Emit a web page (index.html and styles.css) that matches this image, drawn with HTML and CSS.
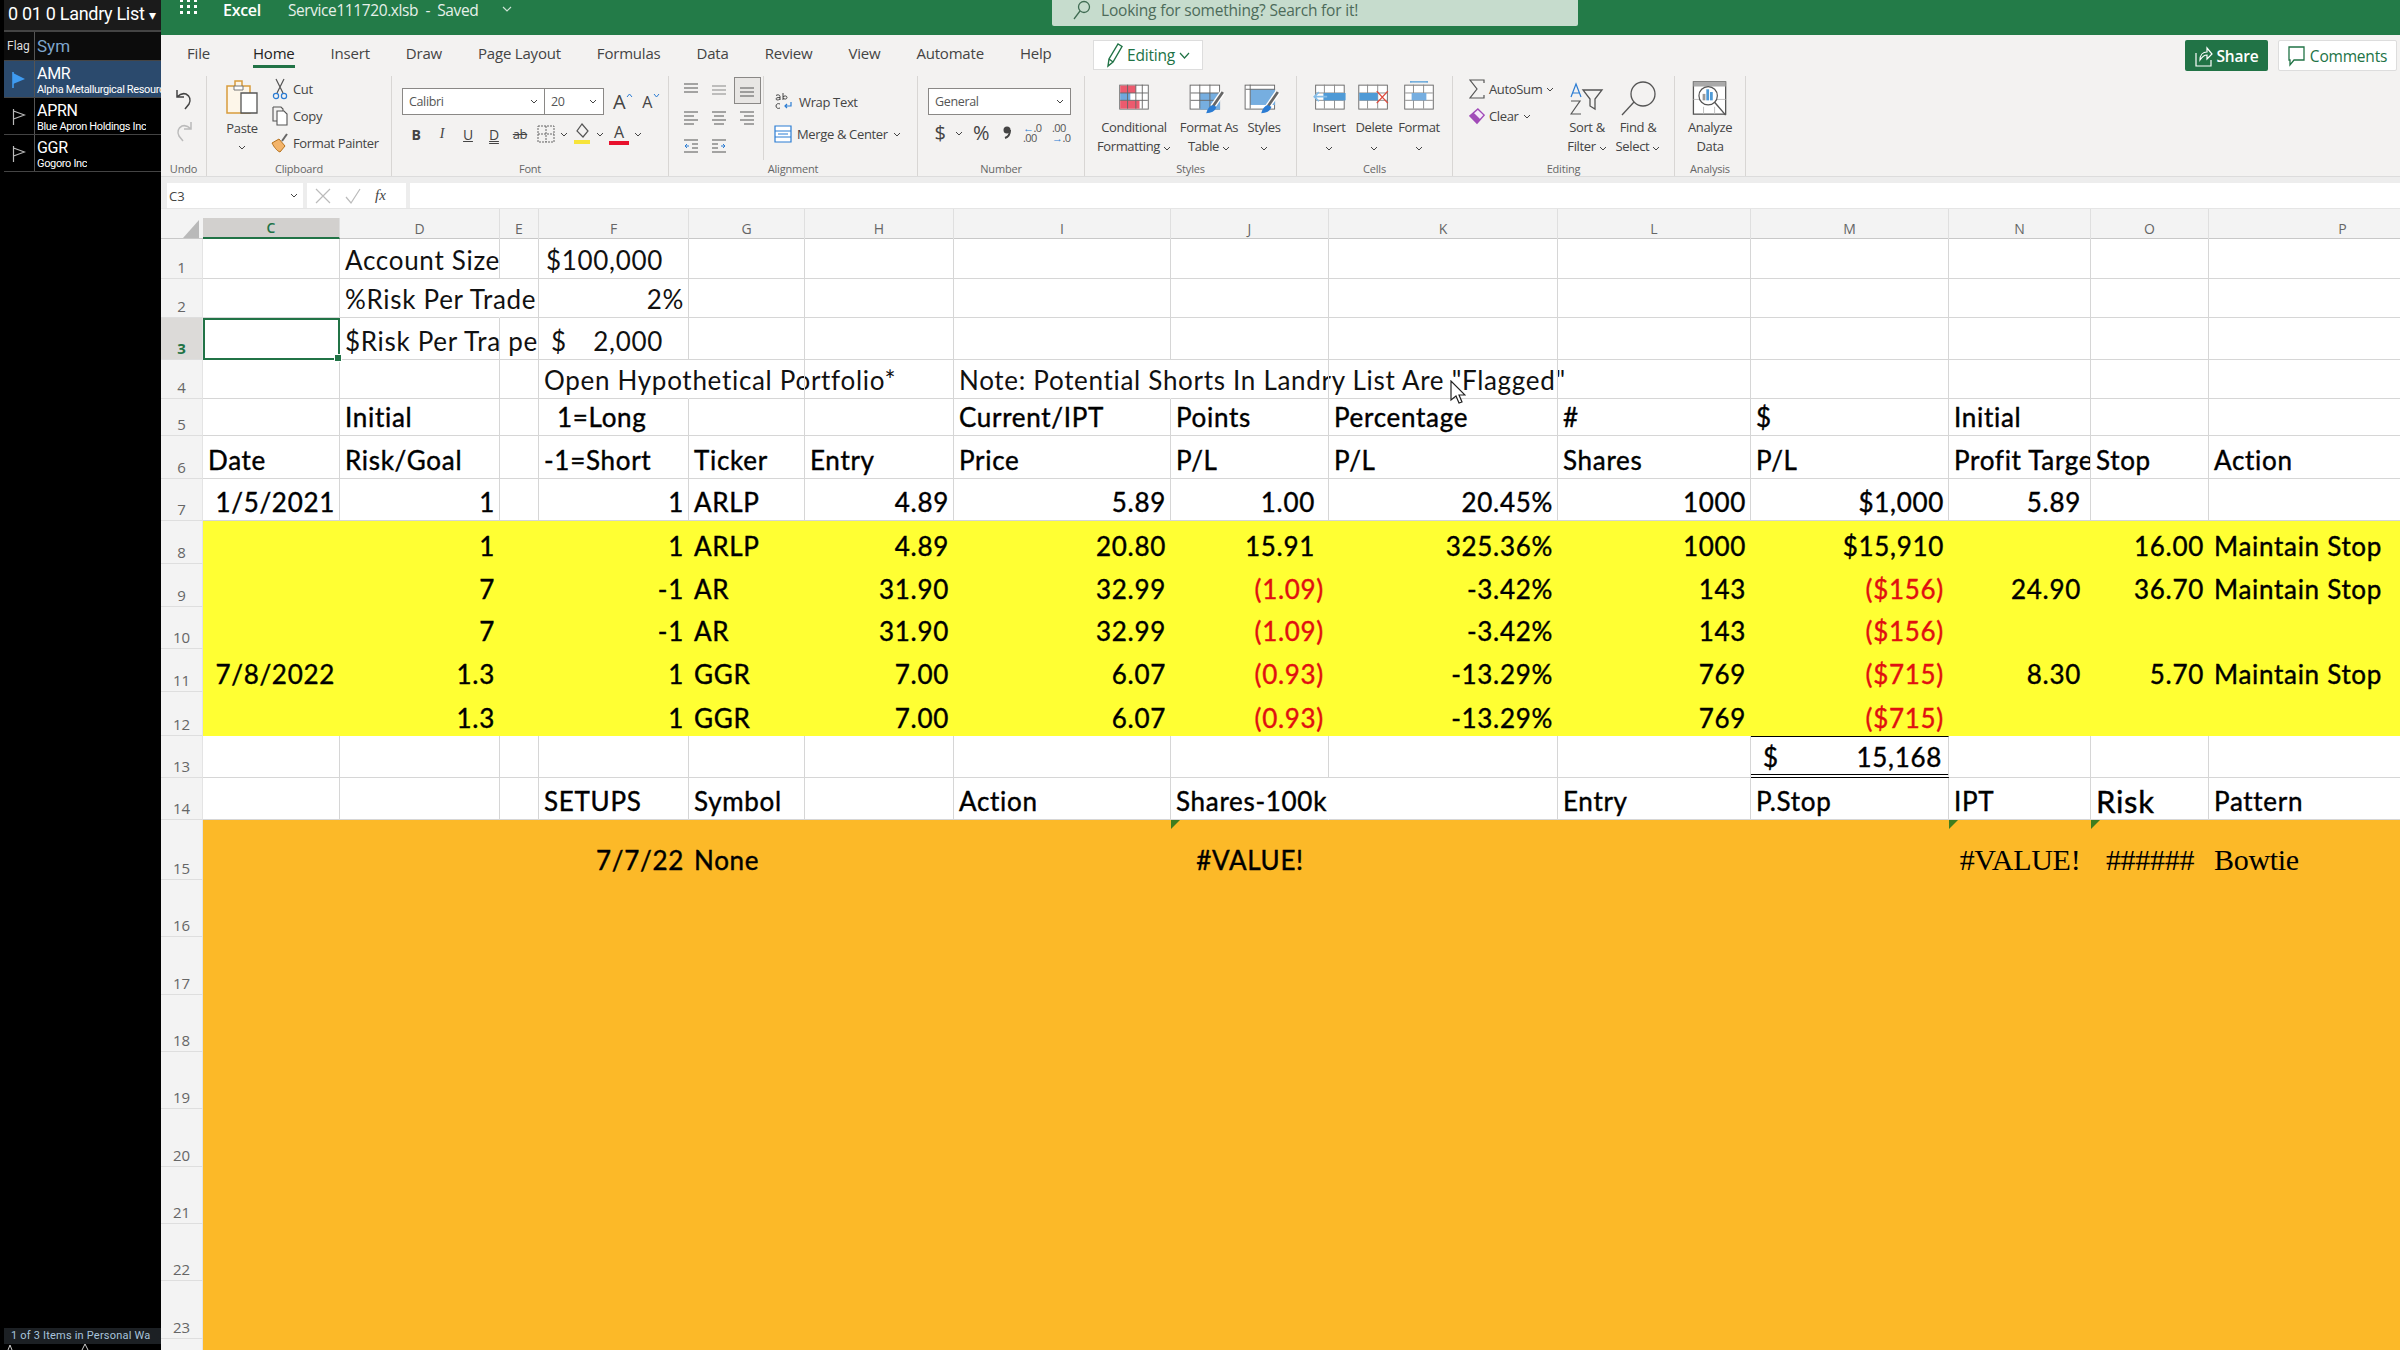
FILE: index.html
```html
<!DOCTYPE html>
<html lang="en">
<head>
    <meta charset="UTF-8">
    <title>Service111720.xlsb - Excel</title>
    <link rel="stylesheet" href="styles.css">
</head>
<body>
<div class="page">

    <!-- watch list on the left -->
    <aside class="watch">
        <div class="watch-title">0 01 0 Landry List <span class="caret">▾</span></div>
        <div class="watch-head"><span class="flag-col">Flag</span><span class="sym-col">Sym</span></div>
        <div class="watch-row selected">
            <div class="flag-col"><svg width="14" height="18" viewBox="0 0 14 18"><path d="M1 1v16" stroke="#3f9bf0" stroke-width="1.6"/><path d="M1 2l12 6-12 5z" fill="#3f9bf0"/></svg></div>
            <div class="sym-col"><b>AMR</b><small>Alpha Metallurgical Resources</small></div>
        </div>
        <div class="watch-row">
            <div class="flag-col"><svg width="14" height="18" viewBox="0 0 14 18"><path d="M1.500 1v16M1.500 3l11 4-11 4" fill="none" stroke="#bbb" stroke-width="1.200"/></svg></div>
            <div class="sym-col"><b>APRN</b><small>Blue Apron Holdings Inc</small></div>
        </div>
        <div class="watch-row">
            <div class="flag-col"><svg width="14" height="18" viewBox="0 0 14 18"><path d="M1.500 1v16M1.500 3l11 4-11 4" fill="none" stroke="#bbb" stroke-width="1.200"/></svg></div>
            <div class="sym-col"><b>GGR</b><small>Gogoro Inc</small></div>
        </div>
        <div class="watch-status">1 of 3 Items in Personal Wa</div>
        <svg class="watch-foot" width="157" height="6" viewBox="0 0 157 6"><path d="M4 6l2-5 2 5M78 6l3-6 3 6" fill="none" stroke="#ccc"/></svg>
    </aside>

    <main class="excel">
        <!-- green title bar -->
        <header class="titlebar">
            <svg class="waffle" width="18" height="14" viewBox="0 0 18 14" fill="#fff"><rect x="0" y="0" width="3" height="2"/><rect x="7" y="0" width="3" height="2"/><rect x="14" y="0" width="3" height="2"/><rect x="0" y="5" width="3" height="3"/><rect x="7" y="5" width="3" height="3"/><rect x="14" y="5" width="3" height="3"/><rect x="0" y="11" width="3" height="3"/><rect x="7" y="11" width="3" height="3"/><rect x="14" y="11" width="3" height="3"/></svg>
            <span class="app-name">Excel</span>
            <span class="doc-name">Service111720.xlsb &nbsp;-&nbsp; Saved</span>
            <svg class="doc-chev" width="10" height="6" viewBox="0 0 10 6"><path d="M1 1l4 4 4-4" fill="none" stroke="#cfe3d6" stroke-width="1.200"/></svg>
            <div class="search">
                <svg width="20" height="20" viewBox="0 0 20 20"><circle cx="12" cy="7" r="5.500" fill="none" stroke="#3f6b52" stroke-width="1.300"/><path d="M8 11l-6 8" stroke="#3f6b52" stroke-width="1.300"/></svg>
                <span>Looking for something? Search for it!</span>
            </div>
        </header>

        <!-- tabs -->
        <nav class="tabs">
            <span class="tab first">File</span>
            <span class="tab active">Home</span>
            <span class="tab">Insert</span>
            <span class="tab">Draw</span>
            <span class="tab">Page Layout</span>
            <span class="tab">Formulas</span>
            <span class="tab">Data</span>
            <span class="tab">Review</span>
            <span class="tab">View</span>
            <span class="tab">Automate</span>
            <span class="tab">Help</span>
            <span class="editing-btn">
                <svg width="18" height="26" viewBox="0 0 18 26"><path d="M3 24l1-7L13 2l4 2.500L8 20z M4 17l4 3" fill="none" stroke="#217346" stroke-width="1.400"/></svg>
                Editing
                <svg width="11" height="7" viewBox="0 0 11 7"><path d="M1 1l4.500 5L10 1" fill="none" stroke="#217346" stroke-width="1.200"/></svg>
            </span>
            <span class="share-btn">
                <svg width="18" height="22" viewBox="0 0 18 22"><path d="M1 8v13h15v-6M5 15c0-5 3-8 7-8V3l5 6-5 5v-4c-3 0-5 2-7 5z" fill="none" stroke="#fff" stroke-width="1.200"/></svg>
                Share
            </span>
            <span class="comments-btn">
                <svg width="17" height="22" viewBox="0 0 17 22"><path d="M1 2h15v13H6l-4 5v-5H1z" fill="none" stroke="#217346" stroke-width="1.300"/></svg>
                Comments
            </span>
        </nav>

        <!-- ribbon -->
        <section class="ribbon">
            <div class="group g-undo">
                <div class="group-body undo-col">
                    <svg width="20" height="24" viewBox="0 0 20 24"><path d="M3 3v7h7M3 10c3-3 6-4 9-3 4 2 5 6 3 10l-4 5" fill="none" stroke="#444" stroke-width="1.500"/></svg>
                    <svg width="20" height="24" viewBox="0 0 20 24"><path d="M17 3v7h-7M17 10c-3-3-6-4-9-3-4 2-5 6-3 10l4 5" fill="none" stroke="#bbb" stroke-width="1.500"/></svg>
                </div>
                <div class="group-label">Undo</div>
            </div>

            <div class="group g-clip">
                <div class="group-body clip-body">
                    <div class="paste">
                        <svg width="32" height="36" viewBox="0 0 32 36"><path d="M1 6h8V1h7v5h8v27H1z" fill="#fdf6e9" stroke="#d89c3c" stroke-width="1.500"/><path d="M8 6h9v4H8z" fill="#fff" stroke="#777"/><path d="M15 13h16v20H15z" fill="#fff" stroke="#555" stroke-width="1.300"/></svg>
                        <span>Paste</span>
                        <svg class="chev" width="8" height="5" viewBox="0 0 8 5"><path d="M1 1l3 3 3-3" fill="none" stroke="#444"/></svg>
                    </div>
                    <div class="clip-list">
                        <div class="clip-item"><svg width="18" height="22" viewBox="0 0 18 22"><path d="M5 1l7 14M13 1L6 15" stroke="#555" stroke-width="1.200"/><circle cx="5" cy="18" r="2.600" fill="none" stroke="#2b7cd3" stroke-width="1.200"/><circle cx="13" cy="18" r="2.600" fill="none" stroke="#2b7cd3" stroke-width="1.200"/></svg>Cut</div>
                        <div class="clip-item"><svg width="18" height="20" viewBox="0 0 16 20"><path d="M1 1h8l2 2v2M1 1v14h4" fill="none" stroke="#555" stroke-width="1.100"/><path d="M5 5h7l3 3v11H5z" fill="#fff" stroke="#555" stroke-width="1.100"/></svg>Copy</div>
                        <div class="clip-item"><svg width="18" height="20" viewBox="0 0 18 20"><path d="M1 10l7-4 6 7-5 6c-3-1-6-5-8-9z" fill="#f3b46a" stroke="#b5711c"/><path d="M11 8l5-7" stroke="#666" stroke-width="2"/></svg>Format Painter</div>
                    </div>
                </div>
                <div class="group-label">Clipboard</div>
            </div>

            <div class="group g-font">
                <div class="group-body font-body">
                    <div class="font-row1">
                        <div class="select font-name">Calibri<svg width="8" height="5" viewBox="0 0 8 5"><path d="M1 1l3 3 3-3" fill="none" stroke="#444"/></svg></div>
                        <div class="select font-size">20<svg width="8" height="5" viewBox="0 0 8 5"><path d="M1 1l3 3 3-3" fill="none" stroke="#444"/></svg></div>
                        <span class="grow-a">A</span><svg class="tick" width="7" height="5" viewBox="0 0 7 5"><path d="M1 4l2.500-3L6 4" fill="none" stroke="#2b7cd3"/></svg>
                        <span class="shrink-a">A</span><svg class="tick" width="7" height="5" viewBox="0 0 7 5"><path d="M1 1l2.500 3L6 1" fill="none" stroke="#2b7cd3"/></svg>
                    </div>
                    <div class="font-row2">
                        <span class="fmt bold">B</span>
                        <span class="fmt ital">I</span>
                        <span class="fmt under">U</span>
                        <span class="fmt dunder">D</span>
                        <span class="fmt strike">ab</span>
                        <svg width="18" height="18" viewBox="0 0 18 18"><path d="M1 1h16v16H1zM9 1v16M1 9h16" fill="none" stroke="#666" stroke-dasharray="2 1"/></svg>
                        <svg class="chev" width="8" height="5" viewBox="0 0 8 5"><path d="M1 1l3 3 3-3" fill="none" stroke="#444"/></svg>
                        <svg width="18" height="22" viewBox="0 0 18 22"><path d="M9 1l6 7-5 6-6-6z" fill="none" stroke="#555" stroke-width="1.200"/><rect x="1" y="17" width="16" height="4" fill="#f7e43a"/></svg>
                        <svg class="chev" width="8" height="5" viewBox="0 0 8 5"><path d="M1 1l3 3 3-3" fill="none" stroke="#444"/></svg>
                        <span class="color-a">A</span>
                        <svg class="chev" width="8" height="5" viewBox="0 0 8 5"><path d="M1 1l3 3 3-3" fill="none" stroke="#444"/></svg>
                    </div>
                </div>
                <div class="group-label">Font</div>
            </div>

            <div class="group g-align">
                <div class="group-body align-body">
                    <div class="align-grid">
                        <svg width="16" height="16" viewBox="0 0 16 16"><path d="M1 2h14M1 6h14M1 10h14" stroke="#555" stroke-width="1.200"/></svg>
                        <svg width="16" height="16" viewBox="0 0 16 16"><path d="M1 4h14M1 8h14M1 12h14" stroke="#888" stroke-width="1.200"/></svg>
                        <span class="align-on"><svg width="16" height="16" viewBox="0 0 16 16"><path d="M1 6h14M1 10h14M1 14h14" stroke="#555" stroke-width="1.200"/></svg></span>
                        <svg width="16" height="16" viewBox="0 0 16 16"><path d="M1 2h14M1 6h10M1 10h14M1 14h10" stroke="#555" stroke-width="1.200"/></svg>
                        <svg width="16" height="16" viewBox="0 0 16 16"><path d="M1 2h14M3 6h10M1 10h14M3 14h10" stroke="#555" stroke-width="1.200"/></svg>
                        <svg width="16" height="16" viewBox="0 0 16 16"><path d="M1 2h14M5 6h10M1 10h14M5 14h10" stroke="#555" stroke-width="1.200"/></svg>
                        <svg width="16" height="16" viewBox="0 0 16 16"><path d="M1 2h14M9 6h6M9 10h6M1 14h14" stroke="#555" stroke-width="1.200"/><path d="M6 8H2m2-2L2 8l2 2" fill="none" stroke="#2b7cd3"/></svg>
                        <svg width="16" height="16" viewBox="0 0 16 16"><path d="M1 2h14M1 6h6M1 10h6M1 14h14" stroke="#555" stroke-width="1.200"/><path d="M10 8h4m-2-2l2 2-2 2" fill="none" stroke="#2b7cd3"/></svg>
                    </div>
                    <div class="align-text">
                        <div class="align-item"><svg width="20" height="20" viewBox="0 0 20 20"><path d="M2 3.500c1-1 4-1 4 1v3.500M6 5.500c-3 0-4 .5-4 1.500s2 1.500 4 0M9 1v7M9 5c1-1.500 4-1.500 4 .5s-3 2-4 .5M6 12c-2-1-4 0-4 2s2 3 4 2" fill="none" stroke="#444"/><path d="M17 10v4h-6m2-2l-2 2 2 2" fill="none" stroke="#2b7cd3" stroke-width="1.200"/></svg>Wrap Text</div>
                        <div class="align-item"><svg width="18" height="18" viewBox="0 0 18 18"><path d="M1 1h16v16H1z" fill="#fff" stroke="#2b7cd3" stroke-width="1.200"/><path d="M1 6h16M1 12h16M4 9h10" stroke="#2b7cd3"/></svg>Merge &amp; Center<svg class="chev" width="8" height="5" viewBox="0 0 8 5"><path d="M1 1l3 3 3-3" fill="none" stroke="#444"/></svg></div>
                    </div>
                </div>
                <div class="group-label">Alignment</div>
            </div>

            <div class="group g-num">
                <div class="group-body num-body">
                    <div class="select num-format">General<svg width="8" height="5" viewBox="0 0 8 5"><path d="M1 1l3 3 3-3" fill="none" stroke="#444"/></svg></div>
                    <div class="num-row">
                        <span class="num-sign">$</span>
                        <svg class="chev" width="8" height="5" viewBox="0 0 8 5"><path d="M1 1l3 3 3-3" fill="none" stroke="#444"/></svg>
                        <span class="num-sign pct">%</span>
                        <svg class="comma" width="14" height="18" viewBox="0 0 14 18"><circle cx="7" cy="6" r="3.500" fill="#444"/><path d="M10 6c0 4-2 7-5 8" fill="none" stroke="#444" stroke-width="2"/></svg>
                        <span class="dec"><i>←</i>.0<br>.00</span>
                        <span class="dec">.00<br><i>→</i>.0</span>
                    </div>
                </div>
                <div class="group-label">Number</div>
            </div>

            <div class="group g-styles">
                <div class="group-body big-row styles-row">
                    <div class="big-btn w-cond">
                        <svg width="32" height="38" viewBox="0 0 32 38"><rect x="0.500" y="4.500" width="31" height="26" fill="#fff" stroke="#666"/><rect x="1" y="5" width="17" height="8" fill="#ec5b6e"/><rect x="1" y="13" width="11" height="8" fill="#6fa8dc"/><rect x="1" y="21" width="21" height="9" fill="#ec5b6e"/><path d="M9 4v26M18 4v26M25 4v26M1 13h30M1 21h30" stroke="#666"/></svg>
                        <span>Conditional<br>Formatting <svg class="chev" width="8" height="5" viewBox="0 0 8 5"><path d="M1 1l3 3 3-3" fill="none" stroke="#444"/></svg></span>
                    </div>
                    <div class="big-btn w-table">
                        <svg width="42" height="38" viewBox="0 0 42 38"><rect x="0.500" y="4.500" width="32" height="26" fill="#fff" stroke="#666"/><rect x="11" y="13" width="22" height="18" fill="#76aee0"/><path d="M11 4v26M22 4v26M1 13h32M1 21h32" stroke="#666"/><path d="M36 12L25 28" stroke="#fff" stroke-width="6"/><path d="M36 12L25 28" stroke="#666" stroke-width="3"/><path d="M25 26c-3 1-6 4-7 9 5 0 10-2 11-7z" fill="#2b7cd3"/></svg>
                        <span>Format As<br>Table <svg class="chev" width="8" height="5" viewBox="0 0 8 5"><path d="M1 1l3 3 3-3" fill="none" stroke="#444"/></svg></span>
                    </div>
                    <div class="big-btn w-style">
                        <svg width="42" height="38" viewBox="0 0 42 38"><rect x="0.500" y="4.500" width="32" height="26" fill="#fff" stroke="#666"/><rect x="6" y="9" width="27" height="17" fill="#76aee0"/><path d="M1 9h32M6 4v26" stroke="#666"/><path d="M36 12L25 28" stroke="#fff" stroke-width="6"/><path d="M36 12L25 28" stroke="#666" stroke-width="3"/><path d="M25 26c-3 1-6 4-7 9 5 0 10-2 11-7z" fill="#2b7cd3"/></svg>
                        <span>Styles<br><svg class="chev" width="8" height="5" viewBox="0 0 8 5"><path d="M1 1l3 3 3-3" fill="none" stroke="#444"/></svg></span>
                    </div>
                </div>
                <div class="group-label">Styles</div>
            </div>

            <div class="group g-cells">
                <div class="group-body big-row cells-row">
                    <div class="big-btn w-cell">
                        <svg width="36" height="38" viewBox="0 0 36 38"><rect x="3.500" y="4.500" width="31" height="26" fill="#fff" stroke="#666"/><path d="M13 4v26M24 4v26M3 13h31M3 21h31" stroke="#888"/><rect x="12" y="13" width="24" height="8" fill="#4f9ad6"/><path d="M16 17H2m5-5l-5 5 5 5" fill="none" stroke="#85bde8" stroke-width="1.800"/></svg>
                        <span>Insert<br><svg class="chev" width="8" height="5" viewBox="0 0 8 5"><path d="M1 1l3 3 3-3" fill="none" stroke="#444"/></svg></span>
                    </div>
                    <div class="big-btn w-cell">
                        <svg width="34" height="38" viewBox="0 0 34 38"><rect x="0.500" y="4.500" width="31" height="26" fill="#fff" stroke="#666"/><path d="M10 4v26M21 4v26M1 13h30M1 21h30" stroke="#888"/><rect x="1" y="13" width="20" height="8" fill="#4f9ad6"/><path d="M20 11l12 13M32 11L20 24" stroke="#e0493c" stroke-width="1.500"/></svg>
                        <span>Delete<br><svg class="chev" width="8" height="5" viewBox="0 0 8 5"><path d="M1 1l3 3 3-3" fill="none" stroke="#444"/></svg></span>
                    </div>
                    <div class="big-btn w-cell">
                        <svg width="32" height="38" viewBox="0 0 32 38"><rect x="0.500" y="4.500" width="31" height="26" fill="#fff" stroke="#666"/><path d="M10 4v26M21 4v26M1 13h30M1 21h30" stroke="#888"/><rect x="8" y="13" width="16" height="8" fill="#76aee0"/><path d="M7 1h18M7 0v2M25 0v2" stroke="#4f9ad6" stroke-width="1.200"/></svg>
                        <span>Format<br><svg class="chev" width="8" height="5" viewBox="0 0 8 5"><path d="M1 1l3 3 3-3" fill="none" stroke="#444"/></svg></span>
                    </div>
                </div>
                <div class="group-label">Cells</div>
            </div>

            <div class="group g-edit">
                <div class="group-body edit-body">
                    <div class="edit-list">
                        <div class="edit-item"><svg width="16" height="20" viewBox="0 0 16 20"><path d="M15 4V1H1l7 9-7 9h14v-3" fill="none" stroke="#555" stroke-width="1.200"/></svg>AutoSum<svg class="chev" width="8" height="5" viewBox="0 0 8 5"><path d="M1 1l3 3 3-3" fill="none" stroke="#444"/></svg></div>
                        <div class="edit-item"><svg width="16" height="18" viewBox="0 0 18 18"><path d="M10 1l7 7-8 9-8-8z" fill="#f6e9fa" stroke="#a14bb8" stroke-width="1.600"/><path d="M5 5l8 8-4 4-8-8z" fill="#a14bb8"/></svg>Clear<svg class="chev" width="8" height="5" viewBox="0 0 8 5"><path d="M1 1l3 3 3-3" fill="none" stroke="#444"/></svg></div>
                    </div>
                    <div class="big-btn w-sort">
                        <svg width="34" height="35" viewBox="0 0 34 35"><path d="M13 9h19l-7 9v10l-5-3v-7z" fill="none" stroke="#555" stroke-width="1.300"/><path d="M1 16l5-13 5 13M3 12h6" fill="none" stroke="#2b7cd3" stroke-width="1.200"/><path d="M1 20h9L1 33h10" fill="none" stroke="#555" stroke-width="1.200"/></svg>
                        <span>Sort &amp;<br>Filter <svg class="chev" width="8" height="5" viewBox="0 0 8 5"><path d="M1 1l3 3 3-3" fill="none" stroke="#444"/></svg></span>
                    </div>
                    <div class="big-btn w-find">
                        <svg width="36" height="35" viewBox="0 0 36 35"><circle cx="23" cy="13" r="12" fill="none" stroke="#555" stroke-width="1.300"/><path d="M14 21L2 34" stroke="#555" stroke-width="1.300"/></svg>
                        <span>Find &amp;<br>Select <svg class="chev" width="8" height="5" viewBox="0 0 8 5"><path d="M1 1l3 3 3-3" fill="none" stroke="#444"/></svg></span>
                    </div>
                </div>
                <div class="group-label">Editing</div>
            </div>

            <div class="group g-analysis">
                <div class="group-body big-row">
                    <div class="big-btn w-analyze">
                        <svg width="38" height="38" viewBox="0 0 38 38"><rect x="1" y="1" width="35" height="35" fill="#fff" stroke="#555" stroke-width="1.400"/><rect x="1" y="1" width="35" height="5" fill="#aaa"/><path d="M1 20h35M12 28v8M24 28v8" stroke="#bbb"/><circle cx="17" cy="16" r="10" fill="#fff" stroke="#555" stroke-width="1.300"/><rect x="11" y="14" width="3" height="7" fill="#999"/><rect x="15" y="9" width="3" height="12" fill="#4f9ad6"/><rect x="19" y="12" width="3" height="9" fill="#4f9ad6"/><path d="M24 23l12 14" stroke="#555" stroke-width="1.500"/></svg>
                        <span>Analyze<br>Data</span>
                    </div>
                </div>
                <div class="group-label">Analysis</div>
            </div>
        </section>

        <!-- formula bar -->
        <div class="formula-bar">
            <div class="name-box">C3<svg width="8" height="5" viewBox="0 0 8 5"><path d="M1 1l3 3 3-3" fill="none" stroke="#444"/></svg></div>
            <div class="fx-box">
                <svg width="16" height="16" viewBox="0 0 16 16"><path d="M1 1l14 14M15 1L1 15" stroke="#bbb" stroke-width="1.200"/></svg>
                <svg width="16" height="16" viewBox="0 0 16 16"><path d="M1 9l5 6 9-14" fill="none" stroke="#bbb" stroke-width="1.200"/></svg>
                <span class="fx">fx</span>
            </div>
            <div class="formula-input"></div>
        </div>

        <!-- the sheet -->
        <div class="sheet">
            <div class="row heads">
                <div class="corner"><svg width="16" height="18" viewBox="0 0 16 18"><path d="M16 0v18H0z" fill="#b9b9b9"/></svg></div>
                <div class="col on">C</div><div class="col">D</div><div class="col">E</div><div class="col">F</div><div class="col">G</div><div class="col">H</div><div class="col">I</div><div class="col">J</div><div class="col">K</div><div class="col">L</div><div class="col">M</div><div class="col">N</div><div class="col">O</div><div class="col">P</div>
            </div>

            <div class="row">
                <div class="rh">1</div><div class="c"></div><div class="c">Account Size</div><div class="c"></div><div class="c ra pad-acct">$100,000</div><div class="c"></div><div class="c"></div><div class="c"></div><div class="c"></div><div class="c"></div><div class="c"></div><div class="c"></div><div class="c"></div><div class="c"></div><div class="c"></div>
            </div>
            <div class="row">
                <div class="rh">2</div><div class="c"></div><div class="c over">%Risk Per Trade</div><div class="c"></div><div class="c ra">2%</div><div class="c"></div><div class="c"></div><div class="c"></div><div class="c"></div><div class="c"></div><div class="c"></div><div class="c"></div><div class="c"></div><div class="c"></div><div class="c"></div>
            </div>
            <div class="row">
                <div class="rh on">3</div><div class="c selected-cell"></div><div class="c clip">$Risk Per Tra</div><div class="c clip end">pe</div><div class="c acct pad-acct"><span>$</span><span>2,000</span></div><div class="c"></div><div class="c"></div><div class="c"></div><div class="c"></div><div class="c"></div><div class="c"></div><div class="c"></div><div class="c"></div><div class="c"></div><div class="c"></div>
            </div>
            <div class="row">
                <div class="rh">4</div><div class="c"></div><div class="c"></div><div class="c"></div><div class="c over">Open Hypothetical Portfolio*</div><div class="c"></div><div class="c"></div><div class="c over">Note: Potential Shorts In Landry List Are "Flagged"</div><div class="c"></div><div class="c"></div><div class="c"></div><div class="c"></div><div class="c"></div><div class="c"></div><div class="c"></div>
            </div>
            <div class="row firm">
                <div class="rh">5</div><div class="c"></div><div class="c">Initial</div><div class="c"></div><div class="c ind">1=Long</div><div class="c"></div><div class="c"></div><div class="c">Current/IPT</div><div class="c">Points</div><div class="c">Percentage</div><div class="c">#</div><div class="c">$</div><div class="c">Initial</div><div class="c"></div><div class="c"></div>
            </div>
            <div class="row firm">
                <div class="rh">6</div><div class="c">Date</div><div class="c">Risk/Goal</div><div class="c"></div><div class="c">-1=Short</div><div class="c">Ticker</div><div class="c">Entry</div><div class="c">Price</div><div class="c">P/L</div><div class="c">P/L</div><div class="c">Shares</div><div class="c">P/L</div><div class="c clip">Profit Targe</div><div class="c">Stop</div><div class="c">Action</div>
            </div>
            <div class="row firm">
                <div class="rh">7</div><div class="c ra">1/5/2021</div><div class="c ra">1</div><div class="c"></div><div class="c ra">1</div><div class="c">ARLP</div><div class="c ra">4.89</div><div class="c ra">5.89</div><div class="c ra pad-p">1.00</div><div class="c ra">20.45%</div><div class="c ra">1000</div><div class="c ra">$1,000</div><div class="c ra pad-n">5.89</div><div class="c"></div><div class="c"></div>
            </div>

            <div class="row firm yellow">
                <div class="rh">8</div><div class="c"></div><div class="c ra">1</div><div class="c"></div><div class="c ra">1</div><div class="c">ARLP</div><div class="c ra">4.89</div><div class="c ra">20.80</div><div class="c ra pad-p">15.91</div><div class="c ra">325.36%</div><div class="c ra">1000</div><div class="c ra">$15,910</div><div class="c"></div><div class="c ra">16.00</div><div class="c">Maintain Stop</div>
            </div>
            <div class="row firm yellow">
                <div class="rh">9</div><div class="c"></div><div class="c ra">7</div><div class="c"></div><div class="c ra">-1</div><div class="c">AR</div><div class="c ra">31.90</div><div class="c ra">32.99</div><div class="c ra neg">(1.09)</div><div class="c ra">-3.42%</div><div class="c ra">143</div><div class="c ra neg">($156)</div><div class="c ra pad-n">24.90</div><div class="c ra">36.70</div><div class="c">Maintain Stop</div>
            </div>
            <div class="row firm yellow">
                <div class="rh">10</div><div class="c"></div><div class="c ra">7</div><div class="c"></div><div class="c ra">-1</div><div class="c">AR</div><div class="c ra">31.90</div><div class="c ra">32.99</div><div class="c ra neg">(1.09)</div><div class="c ra">-3.42%</div><div class="c ra">143</div><div class="c ra neg">($156)</div><div class="c"></div><div class="c"></div><div class="c"></div>
            </div>
            <div class="row firm yellow">
                <div class="rh">11</div><div class="c ra">7/8/2022</div><div class="c ra">1.3</div><div class="c"></div><div class="c ra">1</div><div class="c">GGR</div><div class="c ra">7.00</div><div class="c ra">6.07</div><div class="c ra neg">(0.93)</div><div class="c ra">-13.29%</div><div class="c ra">769</div><div class="c ra neg">($715)</div><div class="c ra pad-n">8.30</div><div class="c ra">5.70</div><div class="c">Maintain Stop</div>
            </div>
            <div class="row firm yellow">
                <div class="rh">12</div><div class="c"></div><div class="c ra">1.3</div><div class="c"></div><div class="c ra">1</div><div class="c">GGR</div><div class="c ra">7.00</div><div class="c ra">6.07</div><div class="c ra neg">(0.93)</div><div class="c ra">-13.29%</div><div class="c ra">769</div><div class="c ra neg">($715)</div><div class="c"></div><div class="c"></div><div class="c"></div>
            </div>

            <div class="row firm">
                <div class="rh">13</div><div class="c"></div><div class="c"></div><div class="c"></div><div class="c"></div><div class="c"></div><div class="c"></div><div class="c"></div><div class="c"></div><div class="c"></div><div class="c"></div><div class="c acct total"><span>$</span><span>15,168</span></div><div class="c"></div><div class="c"></div><div class="c"></div>
            </div>
            <div class="row firm">
                <div class="rh">14</div><div class="c"></div><div class="c"></div><div class="c"></div><div class="c">SETUPS</div><div class="c">Symbol</div><div class="c"></div><div class="c">Action</div><div class="c over">Shares-100k</div><div class="c"></div><div class="c">Entry</div><div class="c">P.Stop</div><div class="c">IPT</div><div class="c big">Risk</div><div class="c">Pattern</div>
            </div>

            <div class="row firm orange">
                <div class="rh">15</div><div class="c"></div><div class="c"></div><div class="c"></div><div class="c ra low">7/7/22</div><div class="c low">None</div><div class="c"></div><div class="c"></div><div class="c low mid note">#VALUE!</div><div class="c"></div><div class="c"></div><div class="c"></div><div class="c err note">#VALUE!</div><div class="c err note">######</div><div class="c err left">Bowtie</div>
            </div>
            <div class="row orange"><div class="rh">16</div></div>
            <div class="row orange"><div class="rh">17</div></div>
            <div class="row orange"><div class="rh">18</div></div>
            <div class="row orange"><div class="rh">19</div></div>
            <div class="row orange"><div class="rh">20</div></div>
            <div class="row orange"><div class="rh">21</div></div>
            <div class="row orange"><div class="rh">22</div></div>
            <div class="row orange"><div class="rh">23</div></div>
            <div class="row orange"><div class="rh"></div></div>
        </div>

        <svg class="mouse" width="16" height="24" viewBox="0 0 16 24"><path d="M1 1v19l5-4 3 7 3-1-3-7h6z" fill="#fff" stroke="#222" stroke-width="1.200"/></svg>
    </main>
</div>
</body>
</html>
```

FILE: styles.css
```css
/* page frame */
* {
    box-sizing: border-box;
}

body {
    margin: 0;
    background: #000;
    font-family: "Open Sans", sans-serif;
    color: #444;
}

.page {
    display: flex;
    width: 2400px;
    height: 1350px;
    overflow: hidden;
}

/* watch list */
.watch {
    width: 161px;
    flex: none;
    display: flex;
    flex-direction: column;
    background: #000;
    color: #fff;
    font-family: "Roboto", sans-serif;
    padding-left: 4px;
}

.watch-title {
    height: 32px;
    padding: 3px 0 0 4px;
    background: #1b1b1b;
    border-bottom: 2px solid #444;
    font-size: 18px;
    white-space: nowrap;
    letter-spacing: -0.3px;
}

.caret {
    font-size: 14px;
}

.watch-head {
    display: flex;
    height: 29px;
    align-items: center;
    border-bottom: 1px solid #444;
    background: #0c0c0c;
}

.watch-head .flag-col {
    font-size: 12px;
    color: #ddd;
}

.watch-head .sym-col {
    font-size: 17px;
    color: #7fa6cc;
    border-left: 1px solid #555;
    line-height: 28px;
}

.flag-col {
    width: 30px;
    flex: none;
    padding-left: 3px;
}

.sym-col {
    padding-left: 2px;
    overflow: hidden;
    white-space: nowrap;
}

.watch-row {
    display: flex;
    height: 37px;
    border-bottom: 1px solid #444;
    align-items: center;
    overflow: hidden;
}

.watch-row.selected {
    background: #2b4a6d;
}

.watch-row .flag-col {
    padding: 6px 0 0 8px;
}

.watch-row .sym-col {
    border-left: 1px solid #555;
    height: 100%;
    padding-top: 3px;
}

.watch-row b {
    display: block;
    font-weight: 400;
    font-size: 16px;
    line-height: 19px;
    letter-spacing: -0.3px;
}

.watch-row small {
    display: block;
    font-size: 11px;
    line-height: 13px;
    letter-spacing: -0.35px;
}

.watch-status {
    margin-top: auto;
    height: 16px;
    background: #1c2024;
    color: #a8c4dc;
    font-size: 11px;
    line-height: 16px;
    padding-left: 7px;
    white-space: nowrap;
    overflow: hidden;
    letter-spacing: 0.2px;
}

.watch-foot {
    flex: none;
    display: block;
}

/* excel column */
.excel {
    position: relative;
    flex: 1;
    min-width: 0;
    display: flex;
    flex-direction: column;
    background: #f3f2f1;
}

.titlebar {
    height: 35px;
    flex: none;
    display: flex;
    align-items: flex-start;
    background: #237b48;
    color: #fff;
    padding-left: 19px;
}

.app-name {
    margin-left: 25px;
    font-size: 16px;
    font-weight: 600;
    line-height: 20px;
    letter-spacing: -0.3px;
}

.doc-name {
    margin-left: 27px;
    font-size: 15.500px;
    line-height: 20px;
    letter-spacing: -0.4px;
    color: #e6f0ea;
}

.doc-chev {
    margin: 6px 0 0 24px;
}

.search {
    margin-left: auto;
    margin-right: 822px;
    width: 526px;
    height: 26px;
    background: #c6dccd;
    border-radius: 0 0 2px 2px;
    display: flex;
    align-items: flex-start;
    padding-left: 20px;
    gap: 9px;
    font-size: 15.500px;
    line-height: 20px;
    color: #4d6b5a;
    letter-spacing: -0.2px;
}

/* tabs */
.tabs {
    height: 41px;
    flex: none;
    display: flex;
    align-items: flex-start;
    gap: 36px;
    padding: 0 3px 0 26px;
    font-size: 15px;
    letter-spacing: -0.2px;
    color: #444;
}

.tab {
    height: 33px;
    padding-top: 8px;
    line-height: 20px;
    border-bottom: 3px solid transparent;
}

.tab.first {
    margin-right: 7px;
}

.tab.active {
    color: #222;
    font-weight: 500;
    border-bottom-color: #217346;
}

.editing-btn {
    margin: 5px 0 0 5px;
    width: 110px;
    height: 30px;
    background: #fff;
    border: 1px solid #ddd;
    display: flex;
    align-items: center;
    justify-content: center;
    gap: 4px;
    color: #217346;
    font-size: 15.500px;
}

.share-btn {
    margin: 5px 0 0 auto;
    width: 83px;
    height: 31px;
    background: #217346;
    color: #fff;
    display: flex;
    align-items: center;
    justify-content: center;
    gap: 4px;
    font-size: 15.500px;
    font-weight: 600;
    border-radius: 2px;
}

.comments-btn {
    margin: 5px 0 0 -26px;
    width: 119px;
    height: 31px;
    background: #fff;
    border: 1px solid #ddd;
    color: #217346;
    display: flex;
    align-items: center;
    justify-content: center;
    gap: 5px;
    font-size: 15.500px;
    border-radius: 2px;
}

/* ribbon */
.ribbon {
    height: 101px;
    flex: none;
    display: flex;
    font-size: 13px;
    letter-spacing: -0.35px;
    border-bottom: 1px solid #dcdcdc;
}

.group {
    display: flex;
    flex-direction: column;
    border-right: 1px solid #d8d6d4;
}

.group-body {
    flex: 1;
    min-height: 0;
}

.group-label {
    height: 20px;
    text-align: center;
    font-size: 11px;
    line-height: 26px;
    color: #666;
    letter-spacing: -0.2px;
}

.g-undo { width: 46px; }
.g-clip { width: 185px; }
.g-font { width: 277px; }
.g-align { width: 249px; }
.g-num { width: 167px; }
.g-styles { width: 212px; }
.g-cells { width: 156px; }
.g-edit { width: 222px; }
.g-analysis { width: 71px; }

.chev {
    flex: none;
}

.undo-col {
    display: flex;
    flex-direction: column;
    align-items: center;
    gap: 8px;
    padding-top: 11px;
}

.clip-body {
    display: flex;
    padding: 4px 0 0 19px;
    gap: 13px;
}

.paste {
    display: flex;
    flex-direction: column;
    align-items: center;
    width: 32px;
}

.paste span {
    margin-top: 3px;
    line-height: 18px;
}

.paste .chev {
    margin-top: 8px;
}

.clip-list {
    display: flex;
    flex-direction: column;
    gap: 5px;
    margin-top: -2px;
    white-space: nowrap;
    font-size: 13px;
}

.clip-item {
    display: flex;
    align-items: center;
    height: 22px;
    gap: 4px;
    width: 110px;
}

.font-body {
    padding: 12px 0 0 10px;
}

.font-row1 {
    display: flex;
    align-items: center;
}

.select {
    height: 27px;
    background: #fff;
    border: 1px solid #8a8886;
    display: flex;
    align-items: center;
    justify-content: space-between;
    padding: 0 6px;
    font-size: 12.500px;
    color: #555;
}

.font-name {
    width: 143px;
}

.font-size {
    width: 59px;
    border-left: 0;
}

.grow-a {
    margin-left: 9px;
    font-size: 20px;
    line-height: 24px;
}

.shrink-a {
    margin-left: 9px;
    font-size: 16px;
    line-height: 24px;
}

.tick {
    align-self: flex-start;
    margin: 5px 0 0 1px;
}

.font-row2 {
    display: flex;
    align-items: center;
    gap: 5px;
    margin-top: 6px;
    padding-left: 5px;
    height: 26px;
}

.fmt {
    width: 18px;
    text-align: center;
    font-size: 14px;
    margin-right: 3px;
}

.bold { font-weight: 700; }
.ital { font-style: italic; font-family: "Liberation Serif", serif; }
.under { text-decoration: underline; }
.dunder { text-decoration: underline double; }
.strike { text-decoration: line-through; font-size: 13px; }

.color-a {
    width: 20px;
    text-align: center;
    font-size: 16px;
    line-height: 17px;
    border-bottom: 4px solid #e8112d;
}

.align-body {
    display: flex;
    padding-left: 8px;
}

.align-grid {
    display: grid;
    grid-template-columns: repeat(3, 28px);
    grid-auto-rows: 28px;
    place-items: center;
    width: 87px;
    height: 84px;
    border-right: 1px solid #d8d6d4;
    margin-right: 10px;
}

.align-on {
    display: flex;
    width: 27px;
    height: 27px;
    align-items: center;
    justify-content: center;
    background: #e8e6e4;
    border: 1px solid #8a8886;
}

.align-text {
    display: flex;
    flex-direction: column;
    gap: 10px;
    padding-top: 15px;
    white-space: nowrap;
}

.align-item {
    display: flex;
    align-items: center;
    gap: 5px;
    height: 22px;
}

.num-body {
    padding: 12px 0 0 10px;
}

.num-format {
    width: 143px;
}

.num-row {
    display: flex;
    align-items: center;
    gap: 8px;
    margin-top: 5px;
    padding-left: 5px;
}

.num-sign {
    width: 14px;
    text-align: center;
    font-size: 20px;
    line-height: 26px;
}

.pct {
    width: 20px;
}

.comma {
    margin-left: 1px;
    flex: none;
}

.dec {
    font-size: 11px;
    line-height: 10px;
    width: 20px;
    margin-left: 1px;
    color: #555;
    letter-spacing: -0.6px;
}

.dec i {
    color: #2b7cd3;
    font-style: normal;
}

.big-row {
    display: flex;
    justify-content: center;
}

.styles-row {
    justify-content: flex-start;
    gap: 6px;
    padding-left: 13px;
}

.cells-row {
    justify-content: flex-start;
    gap: 1px;
    padding-left: 10px;
}

.big-btn {
    display: flex;
    flex-direction: column;
    align-items: center;
    text-align: center;
    padding-top: 5px;
    flex: none;
}

.big-btn span {
    line-height: 19px;
    margin-top: 2px;
    white-space: nowrap;
}

.w-cond { width: 72px; }
.w-table { width: 66px; }
.w-style { width: 32px; }
.w-cell { width: 44px; }
.w-sort { width: 44px; }
.w-find { width: 46px; margin-left: 6px; }
.w-analyze { width: 60px; }

.edit-body {
    display: flex;
    padding-left: 16px;
}

.edit-list {
    width: 96px;
    display: flex;
    flex-direction: column;
    gap: 5px;
    padding-top: 2px;
    white-space: nowrap;
}

.edit-item {
    display: flex;
    align-items: center;
    gap: 4px;
    height: 22px;
}

/* formula bar */
.formula-bar {
    height: 32px;
    flex: none;
    display: flex;
    gap: 4px;
    padding: 6px 0 0 6px;
    background: #ededed;
    border-bottom: 1px solid #e5e5e5;
}

.name-box {
    width: 136px;
    height: 25px;
    background: #fff;
    display: flex;
    align-items: center;
    justify-content: space-between;
    padding: 0 5px 0 2px;
    font-size: 13px;
}

.fx-box {
    width: 99px;
    height: 25px;
    background: #fff;
    display: flex;
    align-items: center;
    gap: 14px;
    padding-left: 8px;
}

.fx {
    font-family: "Liberation Serif", serif;
    font-style: italic;
    font-size: 15px;
}

.formula-input {
    flex: 1;
    height: 25px;
    background: #fff;
}

/* sheet */
.sheet {
    flex: 1;
    min-height: 0;
    display: grid;
    grid-template-rows: 30px 40px 39px 42px 39px 37px 43px 42px 43px 43px 42px 43px 44px 42px 42px 60px 57px 58px 57px 57px 58px 57px 57px 58px 12px;
    background: #fff;
    overflow: hidden;
}

.row {
    display: grid;
    grid-template-columns: 42px 137px 160px 39px 150px 116px 149px 217px 158px 229px 193px 198px 142px 118px 268px;
    min-height: 0;
}

.rh {
    background: #f3f3f3;
    border-bottom: 1px solid #dedede;
    border-right: 1px solid #e4e4e4;
    display: flex;
    align-items: flex-end;
    justify-content: center;
    padding-bottom: 2px;
    font-size: 15px;
    line-height: 18px;
    color: #666;
}

.rh.on {
    background: #dcdad8;
    color: #217346;
    font-weight: 700;
}

.heads {
    background: #f3f3f3;
    border-bottom: 1px solid #c8c8c8;
}

.corner {
    display: flex;
    align-items: flex-end;
    justify-content: flex-end;
    padding-right: 4px;
    padding-bottom: 1px;
}

.col {
    display: flex;
    align-items: center;
    justify-content: center;
    padding-top: 9px;
    font-size: 14px;
    color: #666;
    border-right: 1px solid #dfdfdf;
}

.col.on {
    background: #d2d0ce;
    color: #217346;
    margin-top: 9px;
    padding-top: 0;
    border-bottom: 2px solid #217346;
    height: 21px;
    font-weight: 600;
}

/* Carlito is not there, Lato is its closest relative */
.c {
    min-width: 0;
    display: flex;
    align-items: flex-end;
    padding: 0 4px 0 5px;
    border-right: 1px solid #d6d6d6;
    border-bottom: 1px solid #d6d6d6;
    font-family: "Lato", sans-serif;
    font-size: 26px;
    letter-spacing: 0.7px;
    line-height: 36px;
    color: #111;
    white-space: nowrap;
}

.firm .c {
    color: #000;
    -webkit-text-stroke: 0.4px currentColor;
}

.ra {
    justify-content: flex-end;
}

.over {
    border-right-color: transparent;
}

.clip {
    overflow: hidden;
}

.clip.end {
    justify-content: flex-end;
    padding: 0;
}

.ind {
    padding-left: 18px;
}

.pad-acct {
    padding-right: 25px;
}

.pad-p {
    padding-right: 13px;
}

.pad-n {
    padding-right: 9px;
}

.acct {
    justify-content: space-between;
    padding-left: 12px;
}

.selected-cell {
    position: relative;
    border: 2px solid #217346;
}

.selected-cell::after {
    content: "";
    position: absolute;
    right: -4px;
    bottom: -4px;
    width: 6px;
    height: 6px;
    background: #217346;
    border: 1px solid #fff;
}

.firm .neg {
    color: #e01010;
}

.firm .total {
    border-top: 1px solid #000;
    border-bottom: 4px double #000;
    padding-right: 6px;
    line-height: 33px;
}

.big {
    font-size: 29px;
}

.firm .big {
    font-size: 31px;
}

.yellow .c {
    background: #ffff33;
    border-color: transparent;
    line-height: 34px;
}

.orange .c {
    background: #fcb928;
    border-color: transparent;
}

.orange {
    background: linear-gradient(#fcb928, #fcb928) 42px 0 no-repeat;
}

.low {
    padding-bottom: 1px;
}

.mid {
    justify-content: center;
}

.firm .err {
    justify-content: center;
    font-family: "Liberation Serif", serif;
    font-size: 30px;
    letter-spacing: -0.3px;
    padding-bottom: 1px;
    -webkit-text-stroke: 0;
}

.firm .left {
    justify-content: flex-start;
}

.note {
    position: relative;
}

.note::before {
    content: "";
    position: absolute;
    left: 0;
    top: 0;
    border-top: 9px solid #3f7d1e;
    border-right: 9px solid transparent;
}

.mouse {
    position: absolute;
    left: 1289px;
    top: 380px;
}
```
